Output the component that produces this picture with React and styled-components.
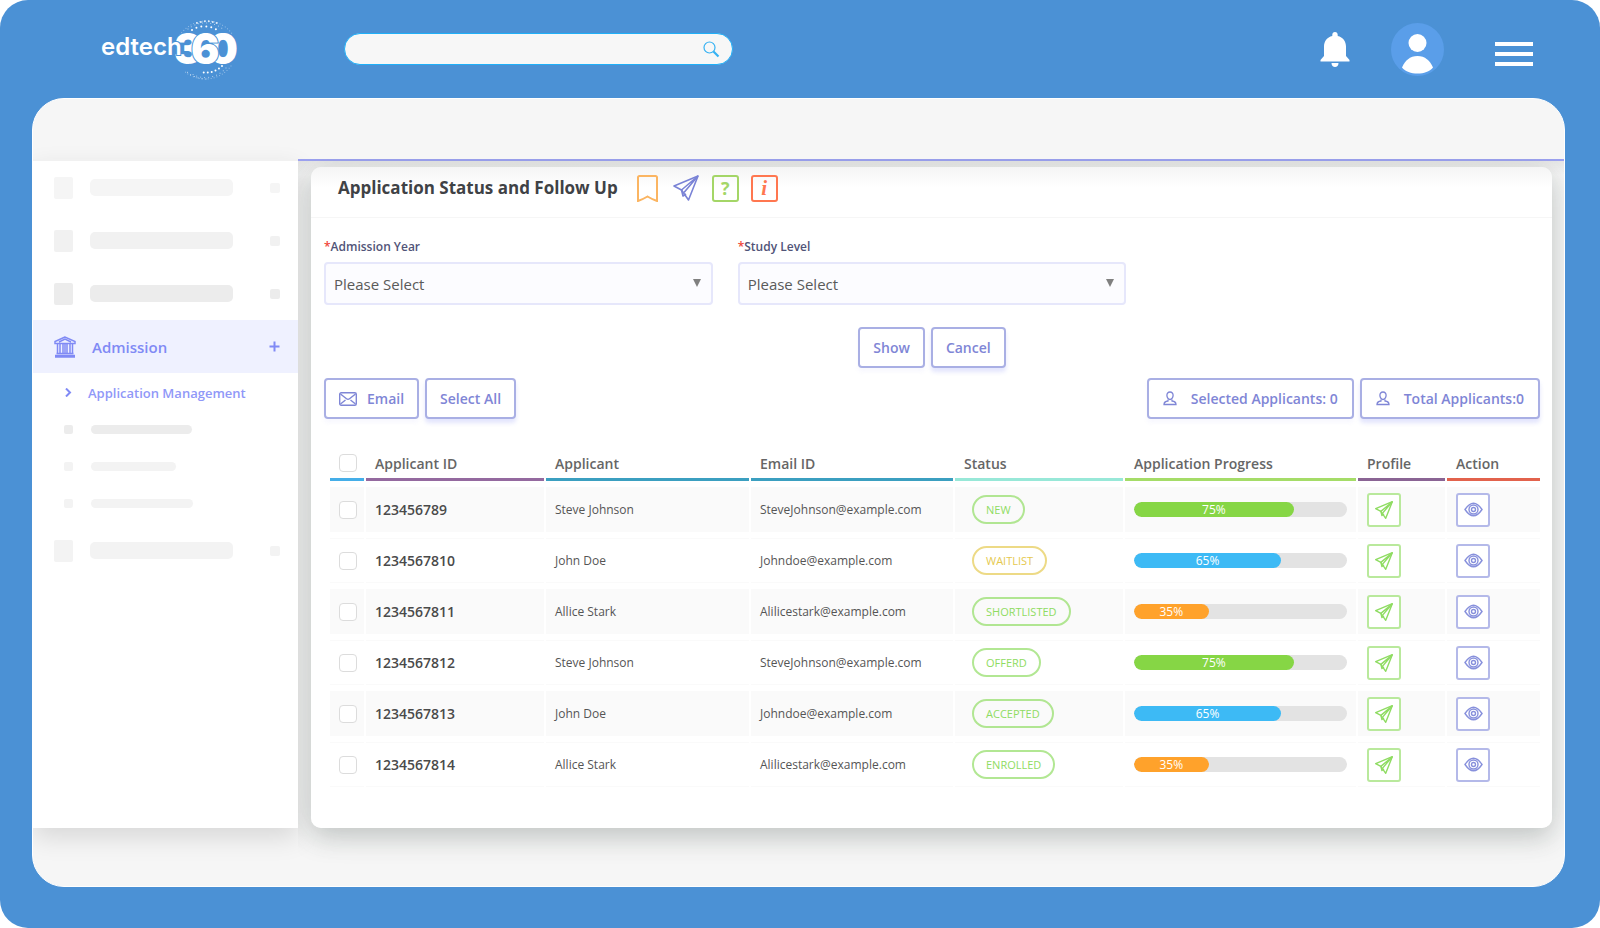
import React, { useState } from 'react';
import styled, { createGlobalStyle, css } from 'styled-components';

const GlobalStyle = createGlobalStyle`
  *, *::before, *::after {
    box-sizing: border-box;
  }

  body {
    margin: 0;
    background: #fff;
    color: #4a4a4a;
    font-family: 'Open Sans', 'Noto Sans', sans-serif;
    font-size: 13px;
  }

  button, input, select {
    font: inherit;
    color: inherit;
  }

  svg {
    display: block;
    flex: none;
  }
`;

/* ---------- frame ---------- */

const Frame = styled.div`
  display: flex;
  flex-direction: column;
  min-height: 100vh;
  padding: 0 35px 41px 32px;
  border-radius: 28px;
  background: #4b91d5;
`;

const TopBar = styled.header`
  display: flex;
  align-items: center;
  height: 98px;
  padding: 0 32px 0 68px;
`;

const Logo = styled.a`
  display: block;
  margin-right: 100px;
`;

const SearchBox = styled.form`
  display: flex;
  align-items: center;
  flex: 0 1 389px;
  height: 32px;
  padding: 0 12px 0 16px;
  border: 1px solid #1fb0f8;
  border-radius: 16px;
  background: #f7f7f7;
`;

const SearchInput = styled.input`
  flex: 1;
  min-width: 0;
  border: 0;
  outline: 0;
  background: transparent;
`;

const PlainButton = styled.button`
  display: flex;
  padding: 0;
  border: 0;
  background: none;
  cursor: pointer;
`;

const TopActions = styled.div`
  display: flex;
  align-items: center;
  margin-left: auto;
`;

const AvatarButton = styled(PlainButton)`
  margin: 0 51px 0 41px;
  border-radius: 50%;
`;

const MenuButton = styled(PlainButton)`
  flex-direction: column;
  gap: 6px;
  width: 38px;
  padding-top: 10px;
`;

const MenuLine = styled.span`
  width: 100%;
  height: 4px;
  background: #fff;
`;

const Shell = styled.div`
  display: flex;
  flex-direction: column;
  flex: 1;
  overflow: hidden;
  border: 1px solid #fff;
  border-radius: 32px;
  background: #f6f6f6;
`;

const Columns = styled.div`
  display: flex;
  margin: 60px 0 58px;
`;

/* ---------- sidebar ---------- */

const Sidebar = styled.nav`
  flex: none;
  width: 265px;
  border-top: 2px solid #f1f1f1;
  background: #fff;
  box-shadow: 0 10px 24px rgba(0, 0, 0, 0.12);
`;

const NavRow = styled.div`
  display: flex;
  align-items: center;
  height: 53px;
  padding: 0 18px 0 21px;
`;

const ActiveRow = styled(NavRow).attrs({ as: 'a' })`
  background: #eff1ff;
  color: #808af5;
  font-size: 15px;
  font-weight: 600;
  text-decoration: none;
`;

const RowLabel = styled.span`
  flex: 1;
  margin-left: 16px;
`;

const SubList = styled.div`
  padding: 1px 0 2px;
`;

const SubRow = styled.div`
  display: flex;
  align-items: center;
  height: 37px;
  padding-left: 31px;
  gap: 18px;
`;

const SubLink = styled(SubRow).attrs({ as: 'a' })`
  gap: 15px;
  color: #9098f8;
  font-weight: 600;
  text-decoration: none;
`;

const Block = styled.span`
  width: ${({ $w }) => $w}px;
  height: ${({ $h }) => $h}px;
  border-radius: ${({ $round }) => ($round ? 5 : 2)}px;
  background: ${({ $tone }) => $tone || '#f3f3f3'};
`;

const BlockRow = styled(NavRow)`
  gap: 17px;

  & > :last-child {
    margin-left: auto;
  }
`;

/* ---------- main card ---------- */

const Main = styled.main`
  flex: 1;
  min-width: 0;
  padding: 6px 12px 0 13px;
  border-top: 2px solid #9ea3f2;
  background: linear-gradient(rgba(0, 0, 0, 0.06), transparent 14px);
  /* the card's shadow may run out below, but not over the strip or the sidebar */
  clip-path: inset(0 0 -60px 0);
`;

const Card = styled.section`
  height: 100%;
  padding-bottom: 35px;
  border-radius: 10px;
  background: linear-gradient(#f5f5f5, #fff 20px);
  box-shadow: 0 10px 24px rgba(70, 85, 80, 0.25), 0 0 40px rgba(70, 85, 80, 0.08);
`;

const CardHeader = styled.div`
  display: flex;
  align-items: center;
  height: 51px;
  padding: 0 27px 8px;
  border-bottom: 1px solid #f6f6f6;
`;

const Title = styled.h1`
  margin: 0 19px 0 0;
  color: #3f4246;
  font-size: 17px;
  font-weight: 700;
  line-height: 24px;
`;

const TitleIcons = styled.div`
  display: flex;
  align-items: center;
  gap: 12px;
`;

const SendButton = styled(PlainButton)`
  margin: 0 1px 0 3px;
  color: #7a83d6;
`;

const CardBody = styled.div`
  padding: 19px 12px 0 13px;
`;

const Filters = styled.div`
  display: grid;
  grid-template-columns: repeat(3, 1fr);
  gap: 25px;
`;

const FieldLabel = styled.label`
  display: block;
  margin-bottom: 5px;
  color: #515478;
  font-size: 12px;
  font-weight: 600;
  line-height: 20px;
`;

const Required = styled.span`
  color: #f04438;
`;

const SelectWrap = styled.div`
  position: relative;
`;

const Select = styled.select`
  width: 100%;
  height: 43px;
  padding: 0 30px 0 8px;
  border: 2px solid #e6e7fb;
  border-radius: 4px;
  outline: 0;
  appearance: none;
  background: #fcfcff;
  color: #5a5a5a;
  font-size: 15px;
`;

const SelectArrow = styled.svg`
  position: absolute;
  top: 17px;
  right: 12px;
  pointer-events: none;
`;

const ButtonRow = styled.div`
  display: flex;
  gap: 6px;
  justify-content: ${({ $center }) => ($center ? 'center' : 'flex-start')};
  margin-top: ${({ $center }) => ($center ? 22 : 10)}px;
`;

const OutlineButton = styled.button`
  display: flex;
  align-items: center;
  justify-content: center;
  gap: 10px;
  height: 41px;
  padding: 0 13px;
  border: 2px solid #a9afe4;
  border-radius: 4px;
  background: #fff;
  color: #7f86d6;
  font-size: 14px;
  font-weight: 600;
  white-space: nowrap;
  cursor: pointer;
  box-shadow: 0 4px 4px rgba(128, 138, 245, 0.06);

  ${({ $raised }) => $raised && css`
    box-shadow: 0 4px 4px rgba(128, 138, 245, 0.22);
  `}
`;

const CountButton = styled(OutlineButton)`
  gap: 14px;
  padding: 0 14px;
`;

const Push = styled.span`
  flex: 1;
`;

/* ---------- table ---------- */

const TableWrap = styled.div`
  margin: 18px -2px 0 4px;
`;

const Table = styled.table`
  width: 100%;
  table-layout: fixed;
  border-collapse: separate;
  border-spacing: 2px 6px;
`;

const HeadCell = styled.th`
  height: 38px;
  padding: 5px 0 0 9px;
  border-bottom: 3px solid ${({ $line }) => $line};
  color: #666;
  font-size: 14px;
  font-weight: 600;
  text-align: left;
  white-space: nowrap;
`;

const Row = styled.tr`
  height: 45px;

  &:nth-child(odd) td {
    background: #fafafa;
  }

  &:nth-child(even) td {
    border-top: 1px solid #fafafa;
    border-bottom: 1px solid #fafafa;
  }
`;

const Cell = styled.td`
  padding: 0 0 0 9px;
  color: #555;
  font-size: 12px;
  white-space: nowrap;
`;

const IdCell = styled(Cell)`
  color: #4a4a4a;
  font-size: 14px;
  font-weight: 600;
`;

const Checkbox = styled.input.attrs({ type: 'checkbox' })`
  display: block;
  width: 18px;
  height: 18px;
  margin: 0;
  border: 1px solid #dcdcdc;
  border-radius: 4px;
  appearance: none;
  background: #fff;

  &:checked {
    background: #808af5;
  }
`;

const Badge = styled.span`
  display: inline-flex;
  align-items: center;
  height: 29px;
  margin-left: 8px;
  padding: 0 12px;
  border: 2px solid ${({ $color }) => $color}b0;
  border-radius: 15px;
  color: ${({ $color }) => $color};
  font-size: 11px;
`;

const Track = styled.div`
  height: 15px;
  margin-right: 9px;
  overflow: hidden;
  border-radius: 8px;
  background: #e3e3e3;
`;

const Fill = styled.div`
  height: 100%;
  border-radius: 8px;
  background: ${({ $color }) => $color};
  color: #fff;
  font-size: 12px;
  line-height: 15px;
  text-align: center;
`;

const IconButton = styled.button`
  display: flex;
  align-items: center;
  justify-content: center;
  width: 34px;
  height: 34px;
  padding: 0;
  border: 2px solid ${({ $color }) => $color}a0;
  border-radius: 3px;
  background: #fff;
  color: ${({ $color }) => $color};
  cursor: pointer;
`;

/* ---------- icons ---------- */

const LogoMark = () => (
  <svg width="144" height="68" viewBox="0 0 144 68" fill="#fff">
    <g fill="none" stroke="#fff" strokeLinecap="round">
      <path d="M92 15 A23 23 0 0 1 117 15" strokeWidth="2" strokeDasharray="0 5" />
      <path d="M88 14 A28 28 0 0 1 124 15" strokeWidth="1" strokeDasharray="0 4" opacity="0.7" />
      <path d="M97 8 A29 29 0 0 1 119 9" strokeWidth="2" strokeDasharray="0 4" opacity="0.8" />
      <path d="M80 20 A32 32 0 0 1 133 20" strokeWidth="1" strokeDasharray="0 3" opacity="0.5" />
      <path d="M122 51 A22 22 0 0 1 101 57" strokeWidth="2" strokeDasharray="0 4" />
      <path d="M126 53 A27 27 0 0 1 92 59" strokeWidth="1" strokeDasharray="0 4" opacity="0.7" />
      <path d="M106 64 A30 30 0 0 1 87 57" strokeWidth="1" strokeDasharray="0 4" opacity="0.8" />
      <path d="M131 51 A32 32 0 0 1 84 56" strokeWidth="1" strokeDasharray="0 3" opacity="0.5" />
    </g>
    <g stroke="#4b91d5" strokeWidth="2" paintOrder="stroke" fontFamily="Inter, sans-serif" fontWeight="900" fontSize="42">
      <text x="74" y="49">3</text>
      <text x="108" y="49">0</text>
      <text x="91" y="49">6</text>
    </g>
    <text x="1" y="40" fontFamily="Inter, sans-serif" fontWeight="600" fontSize="24" stroke="#4b91d5" strokeWidth="2" paintOrder="stroke">edtech</text>
  </svg>
);

const SearchIcon = () => (
  <svg width="17" height="17" viewBox="0 0 17 17" fill="none" stroke="#36b2f3">
    <circle cx="6.5" cy="6.5" r="5.5" strokeWidth="1.2" />
    <path d="M10.5 10.5 L15.5 15.5" strokeWidth="2.2" />
  </svg>
);

const BellIcon = () => (
  <svg width="30" height="35" viewBox="0 0 30 35" fill="#fff">
    <path d="M15 0 C13.3 0 12.3 1.3 12.3 2.8 V4 C7 5.2 4 9.6 4 14.5 V24 L0.5 28 V29.5 H29.5 V28 L26 24 V14.5 C26 9.6 23 5.2 17.7 4 V2.8 C17.7 1.3 16.7 0 15 0 Z" />
    <path d="M11.5 31 H18.5 C18.5 33.4 17 35 15 35 S11.5 33.4 11.5 31 Z" />
  </svg>
);

const AvatarIcon = () => (
  <svg width="53" height="53" viewBox="0 0 53 53">
    <circle cx="26.5" cy="26.5" r="26.5" fill="#5a9ee9" />
    <circle cx="26.5" cy="20" r="9" fill="#fff" />
    <path d="M11 44.5 C14 37.5 19 33 26.5 33 S39 37.5 42 44.5 C38.5 48.5 33 50.5 26.5 50.5 S14.5 48.5 11 44.5 Z" fill="#fff" />
  </svg>
);

const BankIcon = () => (
  <svg width="22" height="22" viewBox="0 0 22 22" fill="none" stroke="currentColor" strokeWidth="1.5">
    <path d="M11 1 L1 5.5 V7.5 H21 V5.5 Z M5 6 L11 3 L17 6" />
    <path d="M3.5 8 V17 M6 8 V17 M9 8 V17 M11 8 V17 M13 8 V17 M16 8 V17 M18.5 8 V17" />
    <path d="M2.5 17.5 H19.5 M1 19.5 H21 M1 21 H21" />
  </svg>
);

const PlusIcon = () => (
  <svg width="11" height="11" viewBox="0 0 11 11" stroke="currentColor" strokeWidth="2">
    <path d="M5.5 0.5 V10.5 M0.5 5.5 H10.5" />
  </svg>
);

const ChevronIcon = () => (
  <svg width="9" height="9" viewBox="0 0 9 9" fill="none" stroke="#808af5" strokeWidth="2">
    <path d="M2 0.5 L6 4.5 L2 8.5" />
  </svg>
);

const BookmarkIcon = () => (
  <svg width="21" height="27" viewBox="0 0 21 27" fill="none" stroke="#fbb562" strokeWidth="2">
    <path d="M1 26 V2.5 Q1 1 2.5 1 H18.5 Q20 1 20 2.5 V26 Q15.5 24.5 10.5 21.5 Q5.5 24.5 1 26 Z" />
  </svg>
);

const PlaneIcon = ({ size = 26 }) => (
  <svg width={size} height={size} viewBox="0 0 26 26" fill="none" stroke="currentColor" strokeWidth={size > 20 ? 1.6 : 2} strokeLinejoin="round">
    <path d="M25 1 L1 11 L8.5 15 L15.5 25 Z" />
    <path d="M25 1 L8.5 15 L10 21 L13 19 M25 1 L11 17.5" />
  </svg>
);

const SquareIcon = styled.span`
  display: grid;
  place-items: center;
  width: 27px;
  height: 27px;
  border: 2px solid ${({ $color }) => $color};
  border-radius: 3px;
  color: ${({ $color }) => $color};
  font-size: 18px;
  font-weight: 700;
  line-height: 20px;
`;

const InfoMark = styled(SquareIcon)`
  font-family: 'Liberation Serif', serif;
  font-style: italic;
  font-size: 21px;
`;

const MailIcon = () => (
  <svg width="18" height="14" viewBox="0 0 18 14" fill="none" stroke="currentColor" strokeWidth="1.4">
    <rect x="0.7" y="0.7" width="16.6" height="12.6" rx="1.5" />
    <path d="M1.5 2 L7.5 6.8 Q9 8 10.5 6.8 L16.5 2 M1.5 12 L6.5 8 M16.5 12 L11.5 8" />
  </svg>
);

const PersonIcon = () => (
  <svg width="14" height="15" viewBox="0 0 14 15" fill="none" stroke="currentColor" strokeWidth="1.3">
    <path d="M7 1 C5 1 3.9 2.4 3.9 4.3 S5.2 8.5 7 8.5 S10.1 6.2 10.1 4.3 S9 1 7 1 Z" />
    <path d="M5 8.5 V10 Q1 10.5 1 13.5 H13 Q13 10.5 9 10 V8.5" />
  </svg>
);

const EyeIcon = () => (
  <svg width="19" height="15" viewBox="0 0 19 15" fill="none" stroke="currentColor" strokeWidth="1.4">
    <path d="M1 7.5 Q9.5 -5 18 7.5 Q9.5 20 1 7.5 Z" />
    <circle cx="9.5" cy="7.5" r="4.5" />
    <circle cx="9.5" cy="7.5" r="2" />
  </svg>
);

/* ---------- data ---------- */

const GREEN = '#8fdc62';
const YELLOW = '#e5c94f';
const INDIGO = '#8790dc';

const columns = [
  { key: 'check', width: 34, line: '#45aee8' },
  { key: 'id', title: 'Applicant ID', width: 178, line: '#94699f' },
  { key: 'name', title: 'Applicant', width: 203, line: '#3b9fc0' },
  { key: 'email', title: 'Email ID', width: 202, line: '#3b9fc0' },
  { key: 'status', title: 'Status', width: 168, line: '#98e8d8' },
  { key: 'progress', title: 'Application Progress', width: 231, line: '#a5dc68' },
  { key: 'profile', title: 'Profile', width: 87, line: '#8a6494' },
  { key: 'action', title: 'Action', width: 93, line: '#e2624c' },
];

const progress = {
  high: { label: '75%', fill: 75, color: '#86d645' },
  mid: { label: '65%', fill: 69, color: '#3dbaf5' },
  low: { label: '35%', fill: 35, color: '#ffa22b' },
};

const applicants = [
  { id: '123456789', name: 'Steve Johnson', email: 'SteveJohnson@example.com', status: 'NEW', level: 'high' },
  { id: '1234567810', name: 'John Doe', email: 'Johndoe@example.com', status: 'WAITLIST', level: 'mid' },
  { id: '1234567811', name: 'Allice Stark', email: 'Alilicestark@example.com', status: 'SHORTLISTED', level: 'low' },
  { id: '1234567812', name: 'Steve Johnson', email: 'SteveJohnson@example.com', status: 'OFFERD', level: 'high' },
  { id: '1234567813', name: 'John Doe', email: 'Johndoe@example.com', status: 'ACCEPTED', level: 'mid' },
  { id: '1234567814', name: 'Allice Stark', email: 'Alilicestark@example.com', status: 'ENROLLED', level: 'low' },
];

const topBlocks = ['#f5f5f5', '#f1f1f1', '#ececec'];
const subBlocks = [
  { width: 101, tone: '#ececec' },
  { width: 85, tone: '#f3f3f3' },
  { width: 102, tone: '#f3f3f3' },
];

/* ---------- parts ---------- */

const NavPlaceholder = ({ tone }) => (
  <BlockRow>
    <Block $w={19} $h={22} $tone={tone} />
    <Block $w={143} $h={17} $tone={tone} $round />
    <Block $w={10} $h={10} $tone={tone} />
  </BlockRow>
);

const SelectField = ({ id, label }) => (
  <div>
    <FieldLabel htmlFor={id}>
      <Required>*</Required>
      {label}
    </FieldLabel>
    <SelectWrap>
      <Select id={id}>
        <option>Please Select</option>
      </Select>
      <SelectArrow width="8" height="8" viewBox="0 0 8 8" fill="#808080">
        <path d="M0 0 H8 L4 8 Z" />
      </SelectArrow>
    </SelectWrap>
  </div>
);

const ApplicantRow = ({ applicant, checked, onToggle }) => {
  const {
    id, name, email, status, level,
  } = applicant;
  const bar = progress[level];

  return (
    <Row>
      <Cell>
        <Checkbox aria-label={`Select ${id}`} checked={checked} onChange={() => onToggle(id)} />
      </Cell>
      <IdCell>{id}</IdCell>
      <Cell>{name}</Cell>
      <Cell>{email}</Cell>
      <Cell>
        <Badge $color={status === 'WAITLIST' ? YELLOW : GREEN}>{status}</Badge>
      </Cell>
      <Cell>
        <Track>
          <Fill $color={bar.color} style={{ width: `${bar.fill}%` }}>{bar.label}</Fill>
        </Track>
      </Cell>
      <Cell>
        <IconButton type="button" $color={GREEN} aria-label="Open profile">
          <PlaneIcon size={18} />
        </IconButton>
      </Cell>
      <Cell>
        <IconButton type="button" $color={INDIGO} aria-label="View application">
          <EyeIcon />
        </IconButton>
      </Cell>
    </Row>
  );
};

const App = () => {
  const [selected, setSelected] = useState([]);
  const allSelected = selected.length === applicants.length;

  const toggle = (id) => {
    setSelected(selected.includes(id) ? selected.filter(item => item !== id) : [...selected, id]);
  };

  const toggleAll = () => {
    setSelected(allSelected ? [] : applicants.map(({ id }) => id));
  };

  return (
    <Frame>
      <GlobalStyle />
      <TopBar>
        <Logo href="#" aria-label="edtech360">
          <LogoMark />
        </Logo>
        <SearchBox onSubmit={e => e.preventDefault()}>
          <SearchInput type="text" aria-label="Search" />
          <PlainButton type="submit" aria-label="Search">
            <SearchIcon />
          </PlainButton>
        </SearchBox>
        <TopActions>
          <PlainButton type="button" aria-label="Notifications"><BellIcon /></PlainButton>
          <AvatarButton type="button" aria-label="Account"><AvatarIcon /></AvatarButton>
          <MenuButton type="button" aria-label="Menu">
            <MenuLine />
            <MenuLine />
            <MenuLine />
          </MenuButton>
        </TopActions>
      </TopBar>

      <Shell>
        <Columns>
          <Sidebar>
            {topBlocks.map(tone => <NavPlaceholder key={tone} tone={tone} />)}
            <ActiveRow href="#">
              <BankIcon />
              <RowLabel>Admission</RowLabel>
              <PlusIcon />
            </ActiveRow>
            <SubList>
              <SubLink href="#">
                <ChevronIcon />
                Application Management
              </SubLink>
              {subBlocks.map(({ width, tone }) => (
                <SubRow key={width}>
                  <Block $w={9} $h={9} $tone={tone} />
                  <Block $w={width} $h={9} $tone={tone} $round />
                </SubRow>
              ))}
            </SubList>
            <NavPlaceholder />
          </Sidebar>

          <Main>
            <Card>
              <CardHeader>
                <Title>Application Status and Follow Up</Title>
                <TitleIcons>
                  <PlainButton type="button" aria-label="Bookmark"><BookmarkIcon /></PlainButton>
                  <SendButton type="button" aria-label="Send"><PlaneIcon /></SendButton>
                  <PlainButton type="button" aria-label="Help"><SquareIcon $color="#a4d667">?</SquareIcon></PlainButton>
                  <PlainButton type="button" aria-label="Information"><InfoMark $color="#ff7750">i</InfoMark></PlainButton>
                </TitleIcons>
              </CardHeader>

              <CardBody>
                <Filters>
                  <SelectField id="admission-year" label="Admission Year" />
                  <SelectField id="study-level" label="Study Level" />
                </Filters>

                <ButtonRow $center>
                  <OutlineButton type="button">Show</OutlineButton>
                  <OutlineButton type="button" $raised>Cancel</OutlineButton>
                </ButtonRow>

                <ButtonRow>
                  <OutlineButton type="button">
                    <MailIcon />
                    Email
                  </OutlineButton>
                  <OutlineButton type="button" $raised onClick={toggleAll}>Select All</OutlineButton>
                  <Push />
                  <CountButton type="button">
                    <PersonIcon />
                    {`Selected Applicants: ${selected.length}`}
                  </CountButton>
                  <CountButton type="button" $raised>
                    <PersonIcon />
                    Total Applicants:0
                  </CountButton>
                </ButtonRow>

                <TableWrap>
                  <Table>
                    <colgroup>
                      {columns.map(({ key, width }) => <col key={key} width={width} />)}
                    </colgroup>
                    <thead>
                      <tr>
                        {columns.map(({ key, title, line }) => (
                          <HeadCell key={key} $line={line}>
                            {title || (
                              <Checkbox aria-label="Select all applicants" checked={allSelected} onChange={toggleAll} />
                            )}
                          </HeadCell>
                        ))}
                      </tr>
                    </thead>
                    <tbody>
                      {applicants.map(applicant => (
                        <ApplicantRow
                          key={applicant.id}
                          applicant={applicant}
                          checked={selected.includes(applicant.id)}
                          onToggle={toggle}
                        />
                      ))}
                    </tbody>
                  </Table>
                </TableWrap>
              </CardBody>
            </Card>
          </Main>
        </Columns>
      </Shell>
    </Frame>
  );
};

export default App;
